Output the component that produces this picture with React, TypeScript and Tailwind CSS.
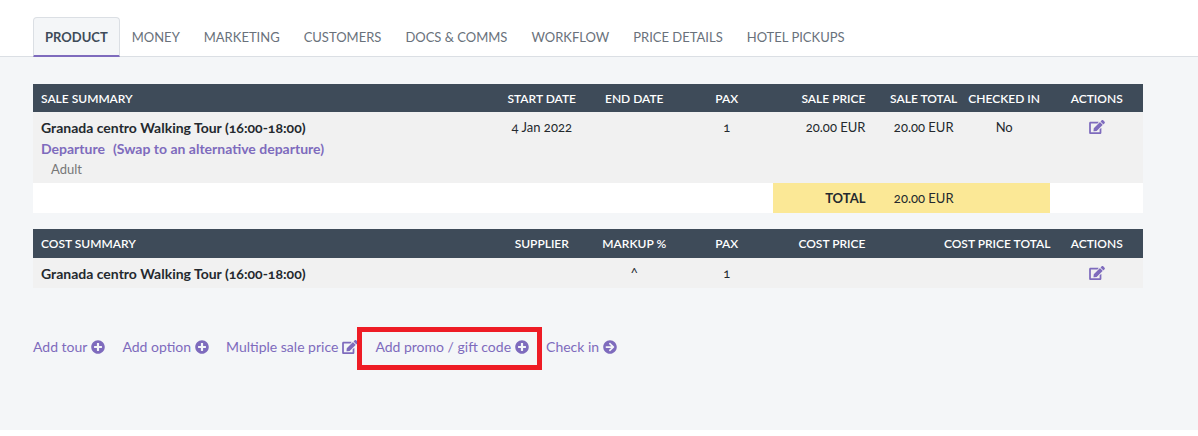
import React from "react";
import { FaArrowCircleRight, FaEdit, FaPlusCircle } from "react-icons/fa";

const tabs = ["Money", "Marketing", "Customers", "Docs & Comms", "Workflow", "Price Details", "Hotel Pickups"];

function Columns() {
  return (
    <colgroup>
      <col className="w-5/12" />
      <col className="w-1/12" />
      <col className="w-1/12" />
      <col className="w-1/12" />
      <col className="w-1/12" />
      <col className="w-1/12" />
      <col className="w-1/12" />
      <col className="w-1/12" />
    </colgroup>
  );
}

function EditButton({ label }: { label: string }) {
  return (
    <button type="button" aria-label={label} className="mx-auto flex h-5 cursor-pointer items-center text-[#7e6bbd]">
      <FaEdit className="h-3.5 w-4" />
    </button>
  );
}

function ActionLink({ text, icon }: { text: string; icon: React.ReactNode }) {
  return (
    <a href="#" className="flex items-center gap-1 whitespace-nowrap">
      {text}
      {icon}
    </a>
  );
}

const table = "w-full table-fixed text-center text-[13px] leading-[21px] whitespace-nowrap text-[#24292e]";
const headRow = "bg-[#3e4b59] text-[12px] text-white uppercase";
const th = "p-0 font-semibold";

export default function App() {
  return (
    <div className="bg-white pb-1.5 font-['Lato',sans-serif] oldstyle-nums">
      <nav className="flex border-b border-[#dbdfe4] pt-[17px] pl-[33px] text-[13px] leading-5 text-[#69717b] uppercase">
        <a
          href="#"
          aria-current="page"
          className="-mb-px rounded-t border border-b-2 border-[#dbdfe4] border-b-[#7e6bbd] bg-[#f4f6f8] px-[11px] pt-[9px] pb-2 font-bold text-[#3e4b59]"
        >
          Product
        </a>
        {tabs.map((tab) => (
          <a key={tab} href="#" className="px-3 pt-2.5 pb-2">
            {tab}
          </a>
        ))}
      </nav>

      <main className="bg-[#f4f6f8] pt-[27px] pr-[55px] pb-[73px] pl-[33px]">
        <table className={table}>
          <Columns />
          <thead>
            <tr className={`h-7 ${headRow}`}>
              <th className={`${th} pl-2 text-left`}>Sale Summary</th>
              <th className={th}>Start Date</th>
              <th className={th}>End Date</th>
              <th className={th}>Pax</th>
              <th className={`${th} text-right`}>Sale Price</th>
              <th className={`${th} pl-6`}>Sale Total</th>
              <th className={th}>Checked In</th>
              <th className={th}>Actions</th>
            </tr>
          </thead>
          <tbody>
            <tr className="bg-[#f1f1f1] align-top">
              <td className="pt-[5px] pb-[3px] pl-2 text-left">
                <div className="text-sm leading-[21px] font-bold">Granada centro Walking Tour (16:00-18:00)</div>
                <div className="flex gap-2 text-sm leading-[21px] font-bold text-[#7e6bbd]">
                  <a href="#">Departure</a>
                  <a href="#">(Swap to an alternative departure)</a>
                </div>
                <div className="pl-2.5 text-[#777777]">Adult</div>
              </td>
              <td className="pt-[5px]">4 Jan 2022</td>
              <td></td>
              <td className="pt-[5px]">1</td>
              <td className="pt-[5px] text-right">20.00 EUR</td>
              <td className="pt-[5px] pl-6">20.00 EUR</td>
              <td className="pt-[5px]">No</td>
              <td className="pt-[5px]">
                <EditButton label="Edit sale" />
              </td>
            </tr>
            <tr className="h-[30px] bg-white">
              <td colSpan={4}></td>
              <td className="bg-[#fbe896] text-right font-bold">TOTAL</td>
              <td className="bg-[#fbe896] pl-6">20.00 EUR</td>
              <td className="bg-[#fbe896]"></td>
              <td></td>
            </tr>
          </tbody>
        </table>

        <table className={`mt-4 ${table}`}>
          <Columns />
          <thead>
            <tr className={`h-[29px] ${headRow}`}>
              <th className={`${th} pl-2 text-left`}>Cost Summary</th>
              <th className={th}>Supplier</th>
              <th className={th}>Markup %</th>
              <th className={th}>Pax</th>
              <th className={`${th} text-right`}>Cost Price</th>
              <th colSpan={2} className={`${th} text-right`}>Cost Price Total</th>
              <th className={th}>Actions</th>
            </tr>
          </thead>
          <tbody>
            <tr className="h-[30px] bg-[#f1f1f1]">
              <td className="pl-2 text-left text-sm leading-[21px] font-bold">Granada centro Walking Tour (16:00-18:00)</td>
              <td></td>
              <td>^</td>
              <td>1</td>
              <td></td>
              <td colSpan={2}></td>
              <td>
                <EditButton label="Edit cost" />
              </td>
            </tr>
          </tbody>
        </table>

        <div className="mt-12 flex items-center gap-[17px] text-sm leading-[21px] text-[#7e6bbd]">
          <ActionLink text="Add tour" icon={<FaPlusCircle className="size-3.5" />} />
          <ActionLink text="Add option" icon={<FaPlusCircle className="size-3.5" />} />
          <ActionLink text="Multiple sale price" icon={<FaEdit className="h-3.5 w-4" />} />
          <div className="relative">
            <ActionLink text="Add promo / gift code" icon={<FaPlusCircle className="size-3.5" />} />
            <div className="pointer-events-none absolute -top-[9px] -right-[13px] -bottom-[13px] -left-[18px] border-5 border-[#ee1c25]"></div>
          </div>
          <ActionLink text="Check in" icon={<FaArrowCircleRight className="size-3.5" />} />
        </div>
      </main>
    </div>
  );
}
